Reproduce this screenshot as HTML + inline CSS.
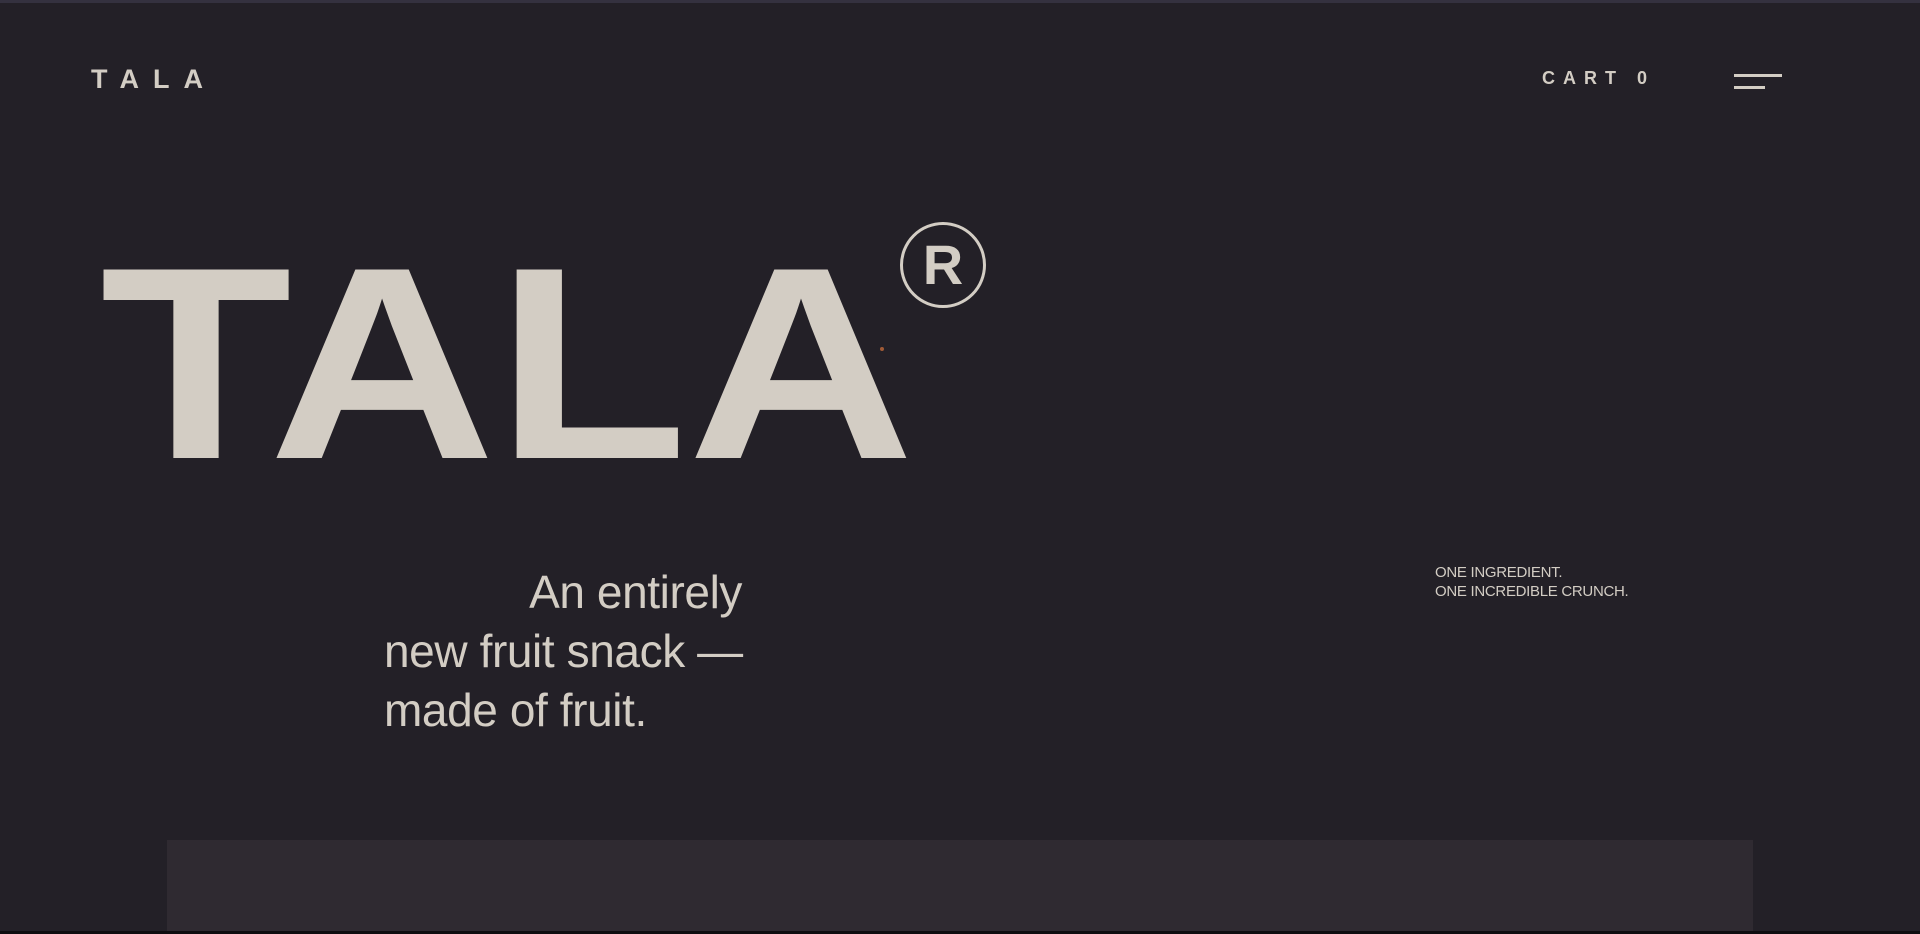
<!DOCTYPE html>
<html><head><meta charset="utf-8"><style>
html,body{margin:0;padding:0;}
body{width:1920px;height:934px;background:#232027;position:relative;overflow:hidden;font-family:"Liberation Sans",sans-serif;color:#d3cdc4;}
.topbar{position:absolute;left:0;top:0;width:1920px;height:3px;background:#34313f;}
.logo{position:absolute;left:91px;top:64px;font-size:27px;font-weight:bold;letter-spacing:14px;line-height:30px;}
.cart{position:absolute;left:1542px;top:67px;font-size:18px;font-weight:bold;letter-spacing:8px;line-height:22px;}
.hb1{position:absolute;left:1734px;top:74px;width:48px;height:3px;background:#d3cdc4;}
.hb2{position:absolute;left:1734px;top:86px;width:31px;height:3px;background:#d3cdc4;}
.big{position:absolute;left:100px;top:227px;font-size:274px;font-weight:bold;line-height:274px;transform:scaleX(1.147);transform-origin:0 0;white-space:nowrap;}
.reg{position:absolute;left:900px;top:222px;width:86px;height:86px;border:3px solid #d3cdc4;border-radius:50%;box-sizing:border-box;text-align:center;font-weight:bold;font-size:56px;line-height:80px;}
.dot{position:absolute;left:880px;top:347px;width:4px;height:4px;border-radius:50%;background:#a05a36;}
.tag{position:absolute;left:384px;top:563px;width:358px;font-size:46px;line-height:59px;letter-spacing:-0.4px;}
.tag div{white-space:nowrap;}
.small{position:absolute;left:1435px;top:563px;font-size:15px;line-height:19px;letter-spacing:-0.3px;}
.panel{position:absolute;left:167px;top:840px;width:1586px;height:91px;background:#2f2a31;}
.bot{position:absolute;left:0;top:931px;width:1920px;height:3px;background:#0e0d10;}
</style></head><body>
<div class="topbar"></div>
<div class="logo">TALA</div>
<div class="cart">CART 0</div>
<div class="hb1"></div><div class="hb2"></div>
<div class="big">TALA</div>
<div class="reg">R</div>
<div class="dot"></div>
<div class="tag"><div style="text-align:right">An entirely</div><div>new fruit snack —</div><div>made of fruit.</div></div>
<div class="small">ONE INGREDIENT.<br>ONE INCREDIBLE CRUNCH.</div>
<div class="panel"></div>
<div class="bot"></div>
</body></html>
